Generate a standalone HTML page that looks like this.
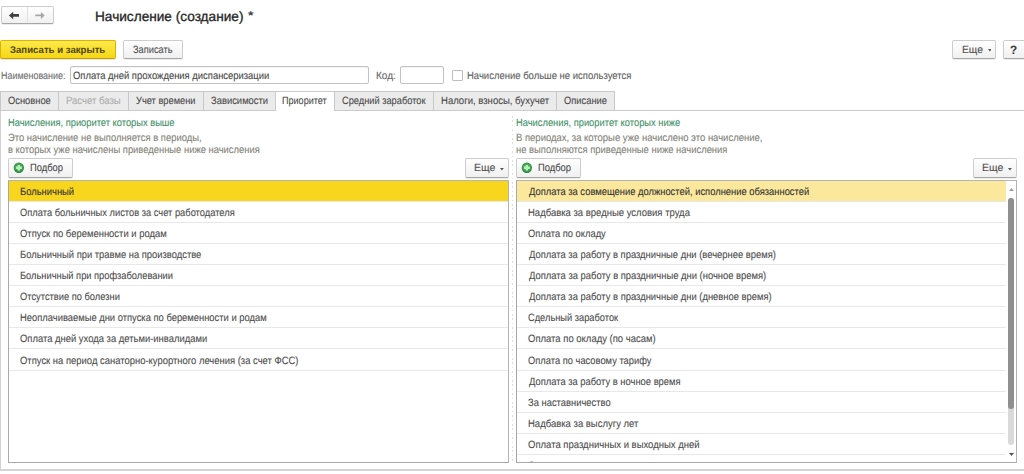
<!DOCTYPE html>
<html><head><meta charset="utf-8"><style>
html,body{margin:0;padding:0;width:1024px;height:474px;overflow:hidden;background:#fff;position:relative}
.t{position:absolute;white-space:nowrap;font-family:"Liberation Sans",sans-serif;text-rendering:geometricPrecision;-webkit-text-stroke-width:0.1px}
.r{position:absolute}
</style></head><body>
<div class="r" style="left:1px;top:6px;width:53px;height:18px;border:1px solid #cdcdcd;border-bottom-color:#a6a6a6;border-radius:2px;background:linear-gradient(#ffffff,#f0f0f0);box-shadow:0 1px 0 rgba(0,0,0,0.07);box-sizing:border-box;"></div>
<div class="r" style="left:27px;top:7px;width:1px;height:16px;background:#e0e0e0"></div>
<svg class="r" style="left:8px;top:10px" width="13" height="11" viewBox="0 0 13 11"><path d="M0.9 5.4 L5.2 1.7 L5.2 4.1 L11 4.1 L11 6.7 L5.2 6.7 L5.2 9.2 Z" fill="#404040"/></svg>
<svg class="r" style="left:33px;top:10px" width="13" height="11" viewBox="0 0 13 11"><path d="M11.7 5.4 L7.9 2.1 L7.9 4.5 L2.2 4.5 L2.2 6.3 L7.9 6.3 L7.9 8.9 Z" fill="#a6a6a6"/></svg>
<div class="t" style="left:95.30px;top:10px;font-size:13.6px;line-height:13.6px;color:#262626;font-weight:normal;transform:scaleX(1.0031);transform-origin:0 0;-webkit-text-stroke-width:0.3px;">Начисление (создание)</div>
<div class="t" style="left:247.68px;top:11px;font-size:11px;line-height:11px;color:#333333;font-weight:normal;transform:scaleX(1.2800);transform-origin:0 0;-webkit-text-stroke-width:0.3px;">*</div>
<div class="r" style="left:0px;top:40px;width:116px;height:19px;border:1px solid #d9b500;border-bottom-color:#c5a000;border-radius:2px;background:linear-gradient(#fde94c,#f6d714);box-sizing:border-box;box-shadow:0 1px 0 rgba(0,0,0,0.10)"></div>
<div class="t" style="left:10.25px;top:46px;font-size:9.8px;line-height:9.8px;color:#4f4500;font-weight:bold;transform:scaleX(0.9813);transform-origin:0 0;-webkit-text-stroke-width:0;">Записать и закрыть</div>
<div class="r" style="left:123px;top:40px;width:60px;height:19px;border:1px solid #cdcdcd;border-bottom-color:#a6a6a6;border-radius:2px;background:linear-gradient(#ffffff,#f0f0f0);box-shadow:0 1px 0 rgba(0,0,0,0.07);box-sizing:border-box;"></div>
<div class="t" style="left:133.16px;top:45px;font-size:10.5px;line-height:10.5px;color:#505050;font-weight:normal;transform:scaleX(0.8841);transform-origin:0 0;">Записать</div>
<div class="r" style="left:952px;top:40px;width:44px;height:19px;border:1px solid #cdcdcd;border-bottom-color:#a6a6a6;border-radius:2px;background:linear-gradient(#ffffff,#f0f0f0);box-shadow:0 1px 0 rgba(0,0,0,0.07);box-sizing:border-box;"></div>
<div class="t" style="left:961.87px;top:45px;font-size:10.5px;line-height:10.5px;color:#505050;font-weight:normal;transform:scaleX(0.9778);transform-origin:0 0;">Еще</div>
<svg class="r" style="left:987.5px;top:49px" width="3.8" height="2.5" viewBox="0 0 3.8 2.5"><path d="M0 0 L3.8 0 L1.9 2.5 Z" fill="#555555"/></svg>
<div class="r" style="left:1003px;top:40px;width:27px;height:19px;border:1px solid #cdcdcd;border-bottom-color:#a6a6a6;border-radius:2px;background:linear-gradient(#ffffff,#f0f0f0);box-shadow:0 1px 0 rgba(0,0,0,0.07);box-sizing:border-box;"></div>
<div class="t" style="left:1010.31px;top:44px;font-size:12px;line-height:12px;color:#3a3a3a;font-weight:bold;transform:scaleX(0.9760);transform-origin:0 0;">?</div>
<div class="t" style="left:0.86px;top:71px;font-size:10.5px;line-height:10.5px;color:#6e6e6e;font-weight:normal;transform:scaleX(0.8514);transform-origin:0 0;">Наименование:</div>
<div class="r" style="left:70px;top:66px;width:299px;height:18px;border:1px solid #c2c2c2;border-radius:2px;background:#fff;box-sizing:border-box;box-shadow:inset 0 1px 1px rgba(0,0,0,0.05)"></div>
<div class="t" style="left:73.35px;top:71px;font-size:10.5px;line-height:10.5px;color:#474747;font-weight:normal;transform:scaleX(0.8975);transform-origin:0 0;">Оплата дней прохождения диспансеризации</div>
<div class="t" style="left:376.28px;top:71px;font-size:10.5px;line-height:10.5px;color:#686868;font-weight:normal;transform:scaleX(0.9579);transform-origin:0 0;">Код:</div>
<div class="r" style="left:400px;top:66px;width:44px;height:18px;border:1px solid #c2c2c2;border-radius:2px;background:#fff;box-sizing:border-box;box-shadow:inset 0 1px 1px rgba(0,0,0,0.05)"></div>
<div class="r" style="left:452px;top:70px;width:11px;height:11px;border:1px solid #bdbdbd;border-radius:1px;background:#fff;box-sizing:border-box"></div>
<div class="t" style="left:467.32px;top:71px;font-size:10.5px;line-height:10.5px;color:#5e5e5e;font-weight:normal;transform:scaleX(0.9030);transform-origin:0 0;">Начисление больше не используется</div>
<div class="r" style="left:0px;top:110px;width:1024px;height:1px;background:#cbcbcb"></div>
<div class="r" style="left:0px;top:91px;width:59px;height:20px;border:1px solid #c8c8c8;border-bottom-color:#cbcbcb;background:#ebebeb;box-sizing:border-box"></div>
<div class="r" style="left:58px;top:91px;width:71px;height:20px;border:1px solid #c8c8c8;border-bottom-color:#cbcbcb;background:#ebebeb;box-sizing:border-box"></div>
<div class="r" style="left:128px;top:91px;width:76px;height:20px;border:1px solid #c8c8c8;border-bottom-color:#cbcbcb;background:#ebebeb;box-sizing:border-box"></div>
<div class="r" style="left:203px;top:91px;width:73px;height:20px;border:1px solid #c8c8c8;border-bottom-color:#cbcbcb;background:#ebebeb;box-sizing:border-box"></div>
<div class="r" style="left:275px;top:91px;width:60px;height:20px;border:1px solid #cbcbcb;border-bottom:none;background:#fff;box-sizing:border-box"></div>
<div class="r" style="left:334px;top:91px;width:100px;height:20px;border:1px solid #c8c8c8;border-bottom-color:#cbcbcb;background:#ebebeb;box-sizing:border-box"></div>
<div class="r" style="left:433px;top:91px;width:124px;height:20px;border:1px solid #c8c8c8;border-bottom-color:#cbcbcb;background:#ebebeb;box-sizing:border-box"></div>
<div class="r" style="left:556px;top:91px;width:59px;height:20px;border:1px solid #c8c8c8;border-bottom-color:#cbcbcb;background:#ebebeb;box-sizing:border-box"></div>
<div class="t" style="left:7.76px;top:96px;font-size:10.5px;line-height:10.5px;color:#4a4a4a;font-weight:normal;transform:scaleX(0.8889);transform-origin:0 0;">Основное</div>
<div class="t" style="left:65.92px;top:96px;font-size:10.5px;line-height:10.5px;color:#adadad;font-weight:normal;transform:scaleX(0.9089);transform-origin:0 0;">Расчет базы</div>
<div class="t" style="left:135.78px;top:96px;font-size:10.5px;line-height:10.5px;color:#4a4a4a;font-weight:normal;transform:scaleX(0.8842);transform-origin:0 0;">Учет времени</div>
<div class="t" style="left:210.55px;top:96px;font-size:10.5px;line-height:10.5px;color:#4a4a4a;font-weight:normal;transform:scaleX(0.8960);transform-origin:0 0;">Зависимости</div>
<div class="t" style="left:282.05px;top:96px;font-size:10.5px;line-height:10.5px;color:#4a4a4a;font-weight:normal;transform:scaleX(0.8627);transform-origin:0 0;">Приоритет</div>
<div class="t" style="left:342.46px;top:96px;font-size:10.5px;line-height:10.5px;color:#4a4a4a;font-weight:normal;transform:scaleX(0.8817);transform-origin:0 0;">Средний заработок</div>
<div class="t" style="left:441.12px;top:96px;font-size:10.5px;line-height:10.5px;color:#4a4a4a;font-weight:normal;transform:scaleX(0.9085);transform-origin:0 0;">Налоги, взносы, бухучет</div>
<div class="t" style="left:564.25px;top:96px;font-size:10.5px;line-height:10.5px;color:#4a4a4a;font-weight:normal;transform:scaleX(0.8905);transform-origin:0 0;">Описание</div>
<div class="r" style="left:0px;top:111px;width:1px;height:360px;background:#d2d2d2"></div>
<div class="r" style="left:0px;top:469px;width:1024px;height:2px;background:#d4d4d4"></div>
<div class="r" style="left:512px;top:116px;width:1px;height:346px;background:repeating-linear-gradient(#dedede 0 1.6px, transparent 1.6px 4.4px)"></div>
<div class="t" style="left:7.73px;top:118px;font-size:10.5px;line-height:10.5px;color:#3f9169;font-weight:normal;transform:scaleX(0.8879);transform-origin:0 0;">Начисления, приоритет которых выше</div>
<div class="t" style="left:7.73px;top:133px;font-size:10.5px;line-height:10.5px;color:#838378;font-weight:normal;transform:scaleX(0.8966);transform-origin:0 0;">Это начисление не выполняется в периоды,</div>
<div class="t" style="left:7.73px;top:145px;font-size:10.5px;line-height:10.5px;color:#838378;font-weight:normal;transform:scaleX(0.8950);transform-origin:0 0;">в которых уже начислены приведенные ниже начисления</div>
<div class="t" style="left:515.93px;top:118px;font-size:10.5px;line-height:10.5px;color:#3f9169;font-weight:normal;transform:scaleX(0.8883);transform-origin:0 0;">Начисления, приоритет которых ниже</div>
<div class="t" style="left:515.92px;top:133px;font-size:10.5px;line-height:10.5px;color:#838378;font-weight:normal;transform:scaleX(0.9025);transform-origin:0 0;">В периодах, за которые уже начислено это начисление,</div>
<div class="t" style="left:515.93px;top:145px;font-size:10.5px;line-height:10.5px;color:#838378;font-weight:normal;transform:scaleX(0.8964);transform-origin:0 0;">не выполняются приведенные ниже начисления</div>
<div class="r" style="left:8px;top:158px;width:65px;height:20px;border:1px solid #cdcdcd;border-bottom-color:#a6a6a6;border-radius:2px;background:linear-gradient(#ffffff,#f0f0f0);box-shadow:0 1px 0 rgba(0,0,0,0.07);box-sizing:border-box;"></div>
<svg class="r" style="left:13px;top:162px" width="12" height="12" viewBox="0 0 12 12"><defs><radialGradient id="g8" cx="50%" cy="45%" r="55%"><stop offset="0" stop-color="#58b866"/><stop offset="0.7" stop-color="#3d9f4d"/><stop offset="1" stop-color="#267a34"/></radialGradient></defs><circle cx="5.85" cy="5.75" r="5.15" fill="url(#g8)"/><path d="M5.85 2.9 V8.6 M2.8 5.75 H8.9" stroke="#b9f0bd" stroke-width="2.3"/></svg>
<div class="t" style="left:29.63px;top:163px;font-size:10.5px;line-height:10.5px;color:#4a4a4a;font-weight:normal;transform:scaleX(0.8923);transform-origin:0 0;">Подбор</div>
<div class="r" style="left:516px;top:158px;width:65px;height:20px;border:1px solid #cdcdcd;border-bottom-color:#a6a6a6;border-radius:2px;background:linear-gradient(#ffffff,#f0f0f0);box-shadow:0 1px 0 rgba(0,0,0,0.07);box-sizing:border-box;"></div>
<svg class="r" style="left:521px;top:162px" width="12" height="12" viewBox="0 0 12 12"><defs><radialGradient id="g516" cx="50%" cy="45%" r="55%"><stop offset="0" stop-color="#58b866"/><stop offset="0.7" stop-color="#3d9f4d"/><stop offset="1" stop-color="#267a34"/></radialGradient></defs><circle cx="5.85" cy="5.75" r="5.15" fill="url(#g516)"/><path d="M5.85 2.9 V8.6 M2.8 5.75 H8.9" stroke="#b9f0bd" stroke-width="2.3"/></svg>
<div class="t" style="left:537.63px;top:163px;font-size:10.5px;line-height:10.5px;color:#4a4a4a;font-weight:normal;transform:scaleX(0.8923);transform-origin:0 0;">Подбор</div>
<div class="r" style="left:465px;top:158px;width:44px;height:20px;border:1px solid #cdcdcd;border-bottom-color:#a6a6a6;border-radius:2px;background:linear-gradient(#ffffff,#f0f0f0);box-shadow:0 1px 0 rgba(0,0,0,0.07);box-sizing:border-box;"></div>
<div class="t" style="left:474.15px;top:163px;font-size:10.5px;line-height:10.5px;color:#505050;font-weight:normal;transform:scaleX(0.9975);transform-origin:0 0;">Еще</div>
<svg class="r" style="left:500.4px;top:168px" width="3.8" height="2.5" viewBox="0 0 3.8 2.5"><path d="M0 0 L3.8 0 L1.9 2.5 Z" fill="#555555"/></svg>
<div class="r" style="left:973px;top:158px;width:44px;height:20px;border:1px solid #cdcdcd;border-bottom-color:#a6a6a6;border-radius:2px;background:linear-gradient(#ffffff,#f0f0f0);box-shadow:0 1px 0 rgba(0,0,0,0.07);box-sizing:border-box;"></div>
<div class="t" style="left:982.15px;top:163px;font-size:10.5px;line-height:10.5px;color:#505050;font-weight:normal;transform:scaleX(0.9975);transform-origin:0 0;">Еще</div>
<svg class="r" style="left:1008.4px;top:168px" width="3.8" height="2.5" viewBox="0 0 3.8 2.5"><path d="M0 0 L3.8 0 L1.9 2.5 Z" fill="#555555"/></svg>
<div class="r" style="left:8px;top:180px;width:501px;height:283px;border:1px solid #b4b4b4;border-left-color:#a9a9a9;border-bottom-color:#a9a9a9;background:#fff;box-sizing:border-box"></div>
<div class="r" style="left:9px;top:181px;width:499px;height:281px;overflow:hidden">
<div class="r" style="left:0px;top:0px;width:499px;height:20px;background:#f8d61e"></div>
<div class="r" style="left:0px;top:20px;width:499px;height:1px;background:#e8e8e8"></div>
<div class="t" style="left:11.13px;top:6px;font-size:10.5px;line-height:10.5px;color:#333333;font-weight:normal;transform:scaleX(0.8949);transform-origin:0 0;">Больничный</div>
<div class="r" style="left:0px;top:41px;width:499px;height:1px;background:#e8e8e8"></div>
<div class="t" style="left:11.36px;top:27px;font-size:10.5px;line-height:10.5px;color:#4d4d4d;font-weight:normal;transform:scaleX(0.8876);transform-origin:0 0;">Оплата больничных листов за счет работодателя</div>
<div class="r" style="left:0px;top:62px;width:499px;height:1px;background:#e8e8e8"></div>
<div class="t" style="left:11.35px;top:48px;font-size:10.5px;line-height:10.5px;color:#4d4d4d;font-weight:normal;transform:scaleX(0.8994);transform-origin:0 0;">Отпуск по беременности и родам</div>
<div class="r" style="left:0px;top:83px;width:499px;height:1px;background:#e8e8e8"></div>
<div class="t" style="left:11.13px;top:69px;font-size:10.5px;line-height:10.5px;color:#4d4d4d;font-weight:normal;transform:scaleX(0.8943);transform-origin:0 0;">Больничный при травме на производстве</div>
<div class="r" style="left:0px;top:104px;width:499px;height:1px;background:#e8e8e8"></div>
<div class="t" style="left:11.14px;top:90px;font-size:10.5px;line-height:10.5px;color:#4d4d4d;font-weight:normal;transform:scaleX(0.8853);transform-origin:0 0;">Больничный при профзаболевании</div>
<div class="r" style="left:0px;top:125px;width:499px;height:1px;background:#e8e8e8"></div>
<div class="t" style="left:11.36px;top:111px;font-size:10.5px;line-height:10.5px;color:#4d4d4d;font-weight:normal;transform:scaleX(0.8870);transform-origin:0 0;">Отсутствие по болезни</div>
<div class="r" style="left:0px;top:146px;width:499px;height:1px;background:#e8e8e8"></div>
<div class="t" style="left:11.13px;top:132px;font-size:10.5px;line-height:10.5px;color:#4d4d4d;font-weight:normal;transform:scaleX(0.8932);transform-origin:0 0;">Неоплачиваемые дни отпуска по беременности и родам</div>
<div class="r" style="left:0px;top:167px;width:499px;height:1px;background:#e8e8e8"></div>
<div class="t" style="left:11.35px;top:153px;font-size:10.5px;line-height:10.5px;color:#4d4d4d;font-weight:normal;transform:scaleX(0.8975);transform-origin:0 0;">Оплата дней ухода за детьми-инвалидами</div>
<div class="r" style="left:0px;top:189px;width:499px;height:1px;background:#e8e8e8"></div>
<div class="t" style="left:11.35px;top:175px;font-size:10.5px;line-height:10.5px;color:#4d4d4d;font-weight:normal;transform:scaleX(0.8992);transform-origin:0 0;">Отпуск на период санаторно-курортного лечения (за счет ФСС)</div>
</div>
<div class="r" style="left:516px;top:180px;width:501px;height:283px;border:1px solid #b4b4b4;border-left-color:#a9a9a9;border-bottom-color:#a9a9a9;background:#fff;box-sizing:border-box"></div>
<div class="r" style="left:517px;top:181px;width:499px;height:281px;overflow:hidden">
<div class="r" style="left:0px;top:0px;width:489px;height:20px;background:#fbe89d"></div>
<div class="r" style="left:0px;top:20px;width:489px;height:1px;background:#e8e8e8"></div>
<div class="t" style="left:11.80px;top:6px;font-size:10.5px;line-height:10.5px;color:#333333;font-weight:normal;transform:scaleX(0.8933);transform-origin:0 0;">Доплата за совмещение должностей, исполнение обязанностей</div>
<div class="r" style="left:0px;top:41px;width:489px;height:1px;background:#e8e8e8"></div>
<div class="t" style="left:11.12px;top:27px;font-size:10.5px;line-height:10.5px;color:#4d4d4d;font-weight:normal;transform:scaleX(0.9043);transform-origin:0 0;">Надбавка за вредные условия труда</div>
<div class="r" style="left:0px;top:62px;width:489px;height:1px;background:#e8e8e8"></div>
<div class="t" style="left:11.36px;top:48px;font-size:10.5px;line-height:10.5px;color:#4d4d4d;font-weight:normal;transform:scaleX(0.8899);transform-origin:0 0;">Оплата по окладу</div>
<div class="r" style="left:0px;top:83px;width:489px;height:1px;background:#e8e8e8"></div>
<div class="t" style="left:11.80px;top:69px;font-size:10.5px;line-height:10.5px;color:#4d4d4d;font-weight:normal;transform:scaleX(0.8945);transform-origin:0 0;">Доплата за работу в праздничные дни (вечернее время)</div>
<div class="r" style="left:0px;top:104px;width:489px;height:1px;background:#e8e8e8"></div>
<div class="t" style="left:11.80px;top:90px;font-size:10.5px;line-height:10.5px;color:#4d4d4d;font-weight:normal;transform:scaleX(0.8962);transform-origin:0 0;">Доплата за работу в праздничные дни (ночное время)</div>
<div class="r" style="left:0px;top:125px;width:489px;height:1px;background:#e8e8e8"></div>
<div class="t" style="left:11.80px;top:111px;font-size:10.5px;line-height:10.5px;color:#4d4d4d;font-weight:normal;transform:scaleX(0.8950);transform-origin:0 0;">Доплата за работу в праздничные дни (дневное время)</div>
<div class="r" style="left:0px;top:146px;width:489px;height:1px;background:#e8e8e8"></div>
<div class="t" style="left:11.36px;top:132px;font-size:10.5px;line-height:10.5px;color:#4d4d4d;font-weight:normal;transform:scaleX(0.8837);transform-origin:0 0;">Сдельный заработок</div>
<div class="r" style="left:0px;top:167px;width:489px;height:1px;background:#e8e8e8"></div>
<div class="t" style="left:11.35px;top:153px;font-size:10.5px;line-height:10.5px;color:#4d4d4d;font-weight:normal;transform:scaleX(0.9034);transform-origin:0 0;">Оплата по окладу (по часам)</div>
<div class="r" style="left:0px;top:189px;width:489px;height:1px;background:#e8e8e8"></div>
<div class="t" style="left:11.36px;top:175px;font-size:10.5px;line-height:10.5px;color:#4d4d4d;font-weight:normal;transform:scaleX(0.8890);transform-origin:0 0;">Оплата по часовому тарифу</div>
<div class="r" style="left:0px;top:210px;width:489px;height:1px;background:#e8e8e8"></div>
<div class="t" style="left:11.80px;top:196px;font-size:10.5px;line-height:10.5px;color:#4d4d4d;font-weight:normal;transform:scaleX(0.8923);transform-origin:0 0;">Доплата за работу в ночное время</div>
<div class="r" style="left:0px;top:231px;width:489px;height:1px;background:#e8e8e8"></div>
<div class="t" style="left:11.35px;top:217px;font-size:10.5px;line-height:10.5px;color:#4d4d4d;font-weight:normal;transform:scaleX(0.8940);transform-origin:0 0;">За наставничество</div>
<div class="r" style="left:0px;top:252px;width:489px;height:1px;background:#e8e8e8"></div>
<div class="t" style="left:11.12px;top:238px;font-size:10.5px;line-height:10.5px;color:#4d4d4d;font-weight:normal;transform:scaleX(0.9047);transform-origin:0 0;">Надбавка за выслугу лет</div>
<div class="r" style="left:0px;top:273px;width:489px;height:1px;background:#e8e8e8"></div>
<div class="t" style="left:11.35px;top:259px;font-size:10.5px;line-height:10.5px;color:#4d4d4d;font-weight:normal;transform:scaleX(0.9052);transform-origin:0 0;">Оплата праздничных и выходных дней</div>
<div class="r" style="left:0px;top:294px;width:489px;height:1px;background:#e8e8e8"></div>
<div class="t" style="left:11.35px;top:280px;font-size:10.5px;line-height:10.5px;color:#4d4d4d;font-weight:normal;transform:scaleX(0.8900);transform-origin:0 0;">Оплата сверхурочных часов</div>
</div>
<div class="r" style="left:1008px;top:198px;width:6px;height:247px;background:#d9d9d9;border-radius:3px"></div>
<div class="r" style="left:1008px;top:198px;width:6px;height:211px;background:#8f8f8f;border-radius:3px"></div>
<svg class="r" style="left:1008.5px;top:187.5px" width="5" height="3" viewBox="0 0 5 3"><path d="M0 3 L5 3 L2.5 0 Z" fill="#9c9c9c"/></svg>
<svg class="r" style="left:1008.5px;top:452.5px" width="5" height="3" viewBox="0 0 5 3"><path d="M0 0 L5 0 L2.5 3 Z" fill="#555555"/></svg>
</body></html>
